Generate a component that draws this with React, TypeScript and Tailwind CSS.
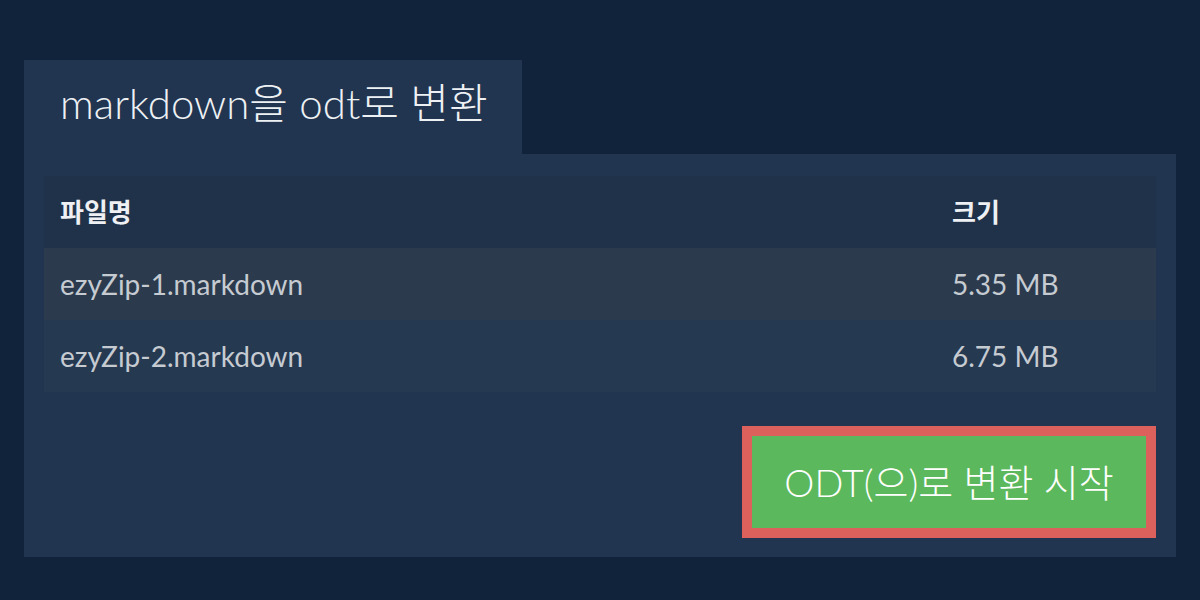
const files = [
  { name: 'ezyZip-1.markdown', size: '5.35 MB' },
  { name: 'ezyZip-2.markdown', size: '6.75 MB' },
]

const font = { fontFamily: '"Lato", "Noto Sans CJK KR", sans-serif' }

export default function App() {
  return (
    <div className="h-[600px] w-[1200px] bg-[#10233a] px-6 pt-[60px]" style={font}>
      <div className="flex h-[94px] w-[498px] items-center bg-[#213550] pl-9 pb-2">
        <h1 className="text-[42px] font-light leading-none text-[#eef1f4]">markdown을 odt로 변환</h1>
      </div>
      <div className="flex h-[403px] flex-col bg-[#213550] px-5 pt-[22px]">
        <div className="flex flex-col">
          <div className="grid h-[72px] grid-cols-[1fr_188px] items-center bg-[#1f3249] px-4">
            <span className="text-[26px] font-bold text-[#eef0f3]">파일명</span>
            <span className="text-[26px] font-bold text-[#eef0f3]">크기</span>
          </div>
          {files.map((f, i) => (
            <div
              key={f.name}
              className={`grid h-[72px] grid-cols-[1fr_188px] items-center px-4 ${i === 0 ? 'bg-[#2b3b4d]' : 'bg-[#253951]'}`}
            >
              <span className="text-[28px] text-[#c6cbd2]">{f.name}</span>
              <span className="text-[28px] text-[#c6cbd2]">{f.size}</span>
            </div>
          ))}
        </div>
        <div className="mt-[34px] flex justify-end">
          <button className="h-[112px] w-[414px] border-[10px] border-[#dc605c] bg-[#5cb85c] text-[38px] font-light text-white">
            ODT(으)로 변환 시작
          </button>
        </div>
      </div>
    </div>
  )
}
